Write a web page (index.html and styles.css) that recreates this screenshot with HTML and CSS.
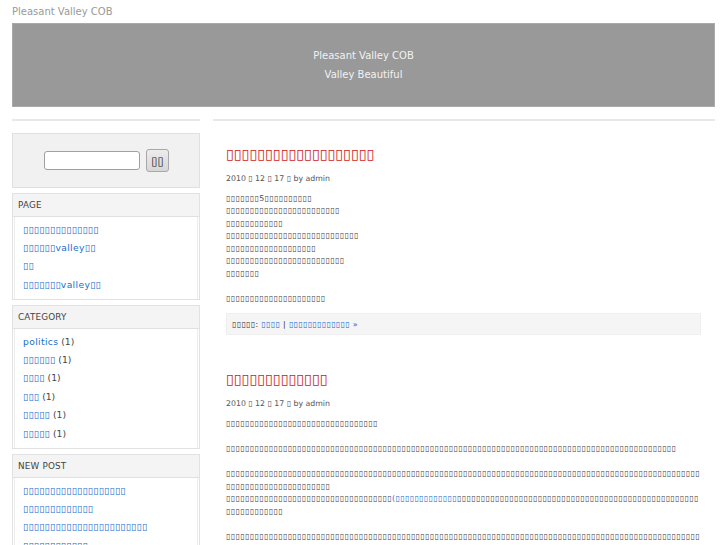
FILE: index.html
```html
<!DOCTYPE html>
<html lang="ja">
<head>
<meta charset="utf-8">
<title>Pleasant Valley COB</title>
<link rel="stylesheet" href="styles.css">
</head>
<body>
<div class="page">
  <div class="site-name">Pleasant Valley COB</div>
  <header class="banner">
    <div>Pleasant Valley COB</div>
    <div>Valley Beautiful</div>
  </header>
  <div class="columns">
    <aside class="sidebar">
      <div class="rule"></div>
      <form class="search">
        <input class="search-input" type="text">
        <button class="search-btn" type="button">▯▯</button>
      </form>
      <section class="widget">
        <h3 class="widget-title">PAGE</h3>
        <ul class="widget-list">
          <li><a href="#">▯▯▯▯▯▯▯▯▯▯▯▯▯▯</a></li>
          <li><a href="#">▯▯▯▯▯▯valley▯▯</a></li>
          <li><a href="#">▯▯</a></li>
          <li><a href="#">▯▯▯▯▯▯▯valley▯▯</a></li>
        </ul>
      </section>
      <section class="widget">
        <h3 class="widget-title">CATEGORY</h3>
        <ul class="widget-list">
          <li><a href="#">politics</a> (1)</li>
          <li><a href="#">▯▯▯▯▯▯</a> (1)</li>
          <li><a href="#">▯▯▯▯</a> (1)</li>
          <li><a href="#">▯▯▯</a> (1)</li>
          <li><a href="#">▯▯▯▯▯</a> (1)</li>
          <li><a href="#">▯▯▯▯▯</a> (1)</li>
        </ul>
      </section>
      <section class="widget">
        <h3 class="widget-title">NEW POST</h3>
        <ul class="widget-list">
          <li><a href="#">▯▯▯▯▯▯▯▯▯▯▯▯▯▯▯▯▯▯▯</a></li>
          <li><a href="#">▯▯▯▯▯▯▯▯▯▯▯▯▯</a></li>
          <li><a href="#">▯▯▯▯▯▯▯▯▯▯▯▯▯▯▯▯▯▯▯▯▯▯▯</a></li>
          <li><a href="#">▯▯▯▯▯▯▯▯▯▯▯▯</a></li>
        </ul>
      </section>
    </aside>
    <main class="main">
      <div class="rule"></div>
      <div class="posts">
        <article class="post">
          <h2 class="post-title"><a href="#">▯▯▯▯▯▯▯▯▯▯▯▯▯▯▯▯▯▯▯</a></h2>
          <div class="post-meta">2010 ▯ 12 ▯ 17 ▯ by admin</div>
          <div class="entry">
            <p>▯▯▯▯▯▯▯5▯▯▯▯▯▯▯▯▯▯<br>▯▯▯▯▯▯▯▯▯▯▯▯▯▯▯▯▯▯▯▯▯▯▯▯<br>▯▯▯▯▯▯▯▯▯▯▯▯<br>▯▯▯▯▯▯▯▯▯▯▯▯▯▯▯▯▯▯▯▯▯▯▯▯▯▯▯▯<br>▯▯▯▯▯▯▯▯▯▯▯▯▯▯▯▯▯▯▯<br>▯▯▯▯▯▯▯▯▯▯▯▯▯▯▯▯▯▯▯▯▯▯▯▯▯<br>▯▯▯▯▯▯▯</p>
            <p>▯▯▯▯▯▯▯▯▯▯▯▯▯▯▯▯▯▯▯▯▯</p>
          </div>
          <div class="post-footer">▯▯▯▯▯: <a href="#">▯▯▯▯</a> | <a href="#">▯▯▯▯▯▯▯▯▯▯▯▯▯ »</a></div>
        </article>
        <article class="post">
          <h2 class="post-title"><a href="#">▯▯▯▯▯▯▯▯▯▯▯▯▯</a></h2>
          <div class="post-meta">2010 ▯ 12 ▯ 17 ▯ by admin</div>
          <div class="entry">
            <p>▯▯▯▯▯▯▯▯▯▯▯▯▯▯▯▯▯▯▯▯▯▯▯▯▯▯▯▯▯▯▯▯</p>
            <p>▯▯▯▯▯▯▯▯▯▯▯▯▯▯▯▯▯▯▯▯▯▯▯▯▯▯▯▯▯▯▯▯▯▯▯▯▯▯▯▯▯▯▯▯▯▯▯▯▯▯▯▯▯▯▯▯▯▯▯▯▯▯▯▯▯▯▯▯▯▯▯▯▯▯▯▯▯▯▯▯▯▯▯▯▯▯▯▯▯▯▯▯▯▯▯</p>
            <p>▯▯▯▯▯▯▯▯▯▯▯▯▯▯▯▯▯▯▯▯▯▯▯▯▯▯▯▯▯▯▯▯▯▯▯▯▯▯▯▯▯▯▯▯▯▯▯▯▯▯▯▯▯▯▯▯▯▯▯▯▯▯▯▯▯▯▯▯▯▯▯▯▯▯▯▯▯▯▯▯▯▯▯▯▯▯▯▯▯▯▯▯▯▯▯▯▯▯▯▯▯▯▯▯▯▯▯▯▯▯▯▯▯▯▯▯▯▯▯▯▯▯<br>▯▯▯▯▯▯▯▯▯▯▯▯▯▯▯▯▯▯▯▯▯▯▯▯▯▯▯▯▯▯▯▯▯▯▯<a href="#">(▯▯▯▯▯▯▯▯▯▯▯▯▯</a>▯▯▯▯▯▯▯▯▯▯▯▯▯▯▯▯▯▯▯▯▯▯▯▯▯▯▯▯▯▯▯▯▯▯▯▯▯▯▯▯▯▯▯▯▯▯▯▯▯▯▯▯▯▯▯▯▯▯▯▯▯▯▯</p>
            <p>▯▯▯▯▯▯▯▯▯▯▯▯▯▯▯▯▯▯▯▯▯▯▯▯▯▯▯▯▯▯▯▯▯▯▯▯▯▯▯▯▯▯▯▯▯▯▯▯▯▯▯▯▯▯▯▯▯▯▯▯▯▯▯▯▯▯▯▯▯▯▯▯▯▯▯▯▯▯▯▯▯▯▯▯▯▯▯▯▯▯▯▯▯▯▯▯▯▯▯▯▯▯▯▯▯▯▯▯▯▯▯▯▯▯▯▯▯▯▯▯▯▯▯▯▯▯▯▯▯▯▯▯▯▯▯▯▯▯▯▯▯▯▯▯▯</p>
          </div>
        </article>
      </div>
    </main>
  </div>
</div>
</body>
</html>
```
FILE: styles.css
```css
* { box-sizing: border-box; }
html, body { margin: 0; padding: 0; background: #fff; }
body {
  font-family: "DejaVu Sans", "Liberation Sans", sans-serif;
  color: #444;
}
a { color: #1a6ecc; text-decoration: none; }

.page { padding: 5px 12px 0; }

.site-name {
  font-size: 10px;
  line-height: 13px;
  color: #999;
}

.banner {
  margin-top: 5px;
  height: 84px;
  background: #999;
  border: 1px solid #aaa;
  color: #f2f2f2;
  font-size: 10px;
  line-height: 19px;
  display: flex;
  flex-direction: column;
  justify-content: center;
  align-items: center;
}

.columns {
  display: flex;
  gap: 13px;
  margin-top: 12px;
  align-items: flex-start;
}

.rule { height: 2px; background: #e8e8e8; }

.sidebar { width: 188px; flex: none; }

.search {
  margin: 12px 0 0;
  height: 55px;
  background: #f1f1f1;
  border: 1px solid #e0e0e0;
  display: flex;
  align-items: center;
  justify-content: center;
  gap: 6px;
  padding-left: 1px;
}
.search-input {
  width: 96px;
  height: 19px;
  border: 1px solid #a0a0a0;
  border-radius: 3px;
  background: #fff;
  margin: 0;
  padding: 0;
}
.search-btn {
  width: 23px;
  height: 23px;
  margin: 0;
  padding: 0;
  border: 1px solid #a8a8a8;
  border-radius: 3px;
  background: linear-gradient(#ececec, #d6d6d6);
  font-family: "DejaVu Sans", sans-serif;
  font-size: 11.5px;
  color: #111;
}

.widget {
  margin-top: 5px;
  border: 1px solid #e2e2e2;
  background: #fff;
}
.widget-title {
  margin: 0;
  height: 23px;
  line-height: 22px;
  padding-left: 5px;
  background: #f4f4f4;
  border-bottom: 1px solid #e0e0e0;
  font-size: 8.8px;
  font-weight: normal;
  color: #444;
  letter-spacing: 0.2px;
}
.widget-list {
  list-style: none;
  margin: 0 1px;
  padding: 3.5px 0 5px 8px;
  font-size: 9.2px;
  line-height: 18.4px;
  color: #444;
  border-left: 1px solid #ececec;
  border-right: 1px solid #ececec;
}
.widget-list a { letter-spacing: 0.35px; }

.main { flex: 1; min-width: 0; }

.posts {
  padding: 24px 14px 0 13px;
  display: flex;
  flex-direction: column;
  gap: 35px;
}

.post-title {
  margin: 0;
  font-size: 14.2px;
  line-height: 18px;
  font-weight: normal;
}
.post-title a { color: #d01818; }

.post-meta {
  margin-top: 9.75px;
  font-size: 7.8px;
  line-height: 12.5px;
  color: #555;
}

.entry {
  margin-top: 7.5px;
  font-size: 7.8px;
  line-height: 12.5px;
  letter-spacing: 0.45px;
  color: #444;
  word-break: break-all;
}
.entry p { margin: 0 0 12.5px; }
.entry p:last-child { margin-bottom: 0; }

.post-footer {
  margin-top: 8px;
  height: 22px;
  line-height: 21px;
  padding-left: 5px;
  background: #f5f5f5;
  border: 1px solid #efefef;
  font-size: 7.8px;
  letter-spacing: 0.4px;
  color: #333;
}
```
